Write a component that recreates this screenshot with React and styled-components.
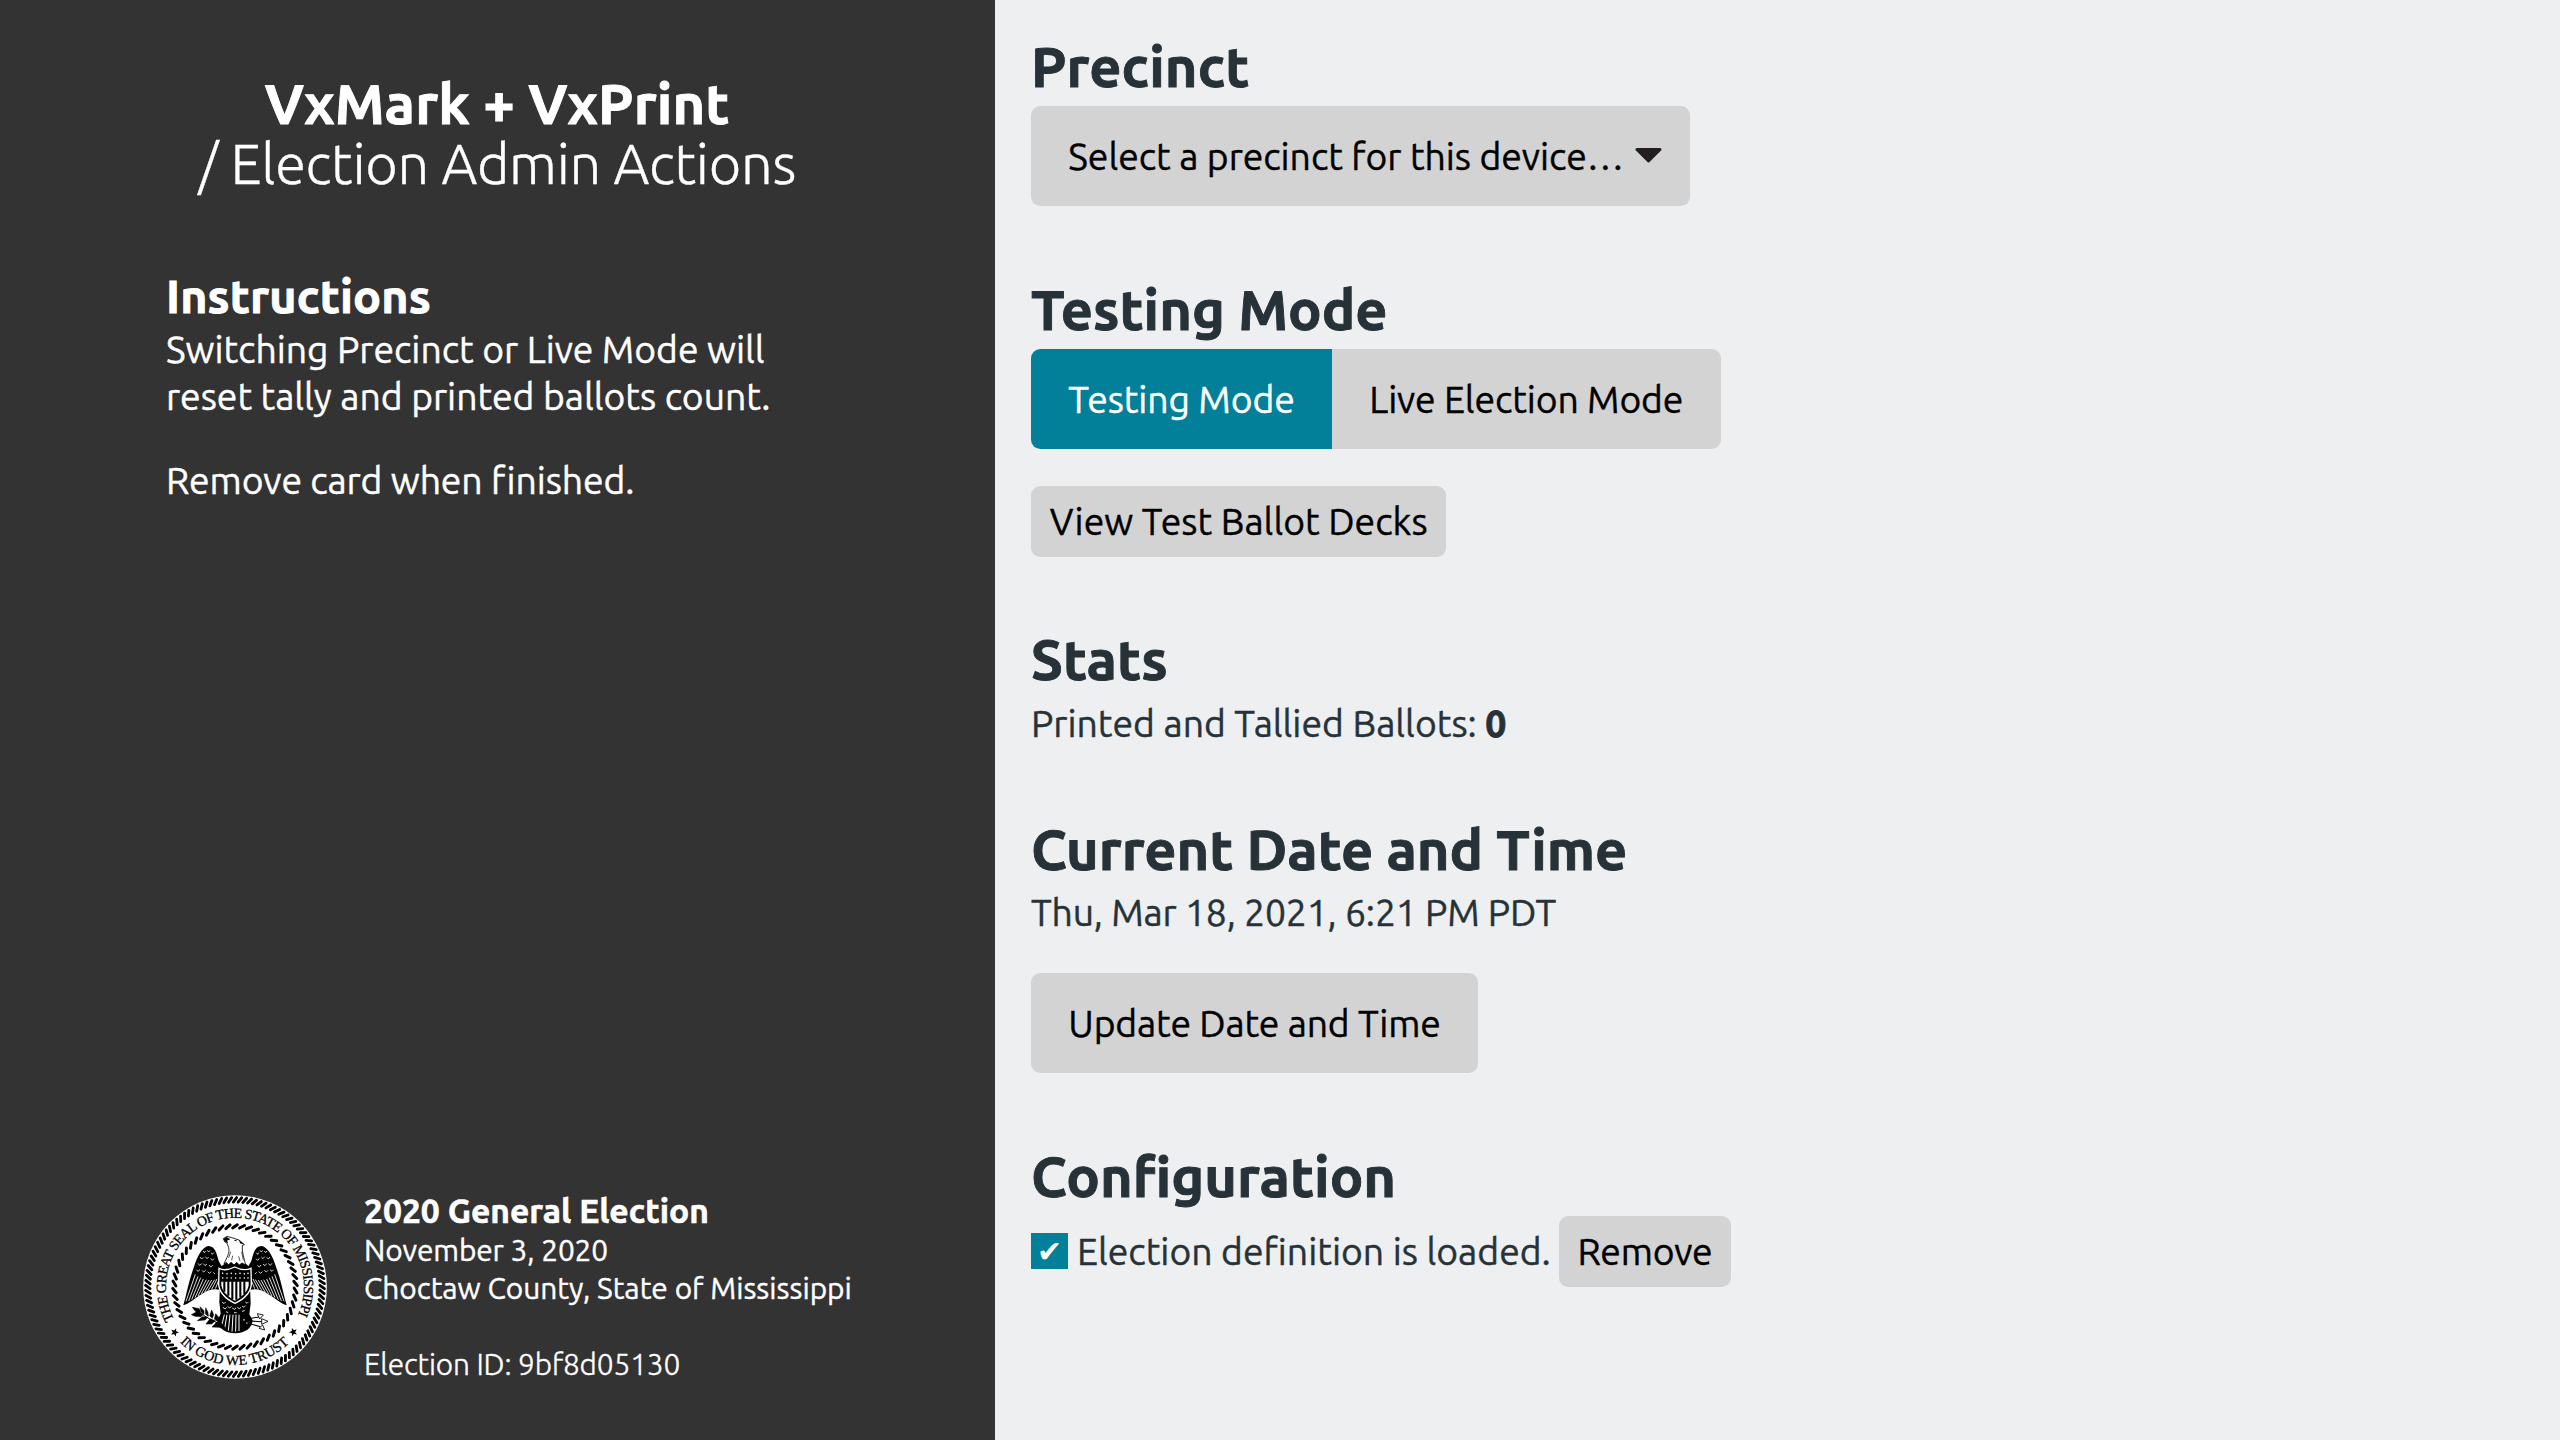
import React from 'react';
import styled, { createGlobalStyle, css } from 'styled-components';

const GlobalStyle = createGlobalStyle`
  *, *::before, *::after { box-sizing: border-box; }
  body {
    margin: 0;
    background: #edeff0;
    color: #263238;
    font-family: Ubuntu, "Noto Sans", sans-serif;
    font-size: 37.33px;
    line-height: 1.25;
    -webkit-text-stroke: 0.4px currentColor;
  }
`;

const tracked = css`
  letter-spacing: ${({ $track }) => $track || 0}px;
`;

const strong = css`
  font-weight: 700;
  -webkit-text-stroke-width: 0.9px;
`;

const Screen = styled.div`
  display: flex;
  width: 100vw;
  height: 100vh;
  overflow: hidden;
`;

const Sidebar = styled.aside`
  display: flex;
  flex-direction: column;
  flex: 0 0 994.5px;
  background: #333333;
  color: #ffffff;
`;

const SidebarTitle = styled.header`
  padding-top: 74px;
  font-size: 56px;
  line-height: 60px;
  text-align: center;
`;

const AppName = styled.div`
  ${strong}
  letter-spacing: 0.12px;
`;

const ScreenName = styled.div`
  font-weight: 300;
  letter-spacing: -0.26px;
`;

const Prose = styled.div`
  flex: 1;
  padding: 77px 166px 0;
`;

const SubHeading = styled.h2`
  margin: 0 0 4px;
  font-size: 46.67px;
  line-height: 1.1;
  ${strong}
  letter-spacing: 0.13px;
`;

const Paragraph = styled.p`
  margin: 0;
  ${tracked}
  & + & { margin-top: 37.33px; }
  b { ${strong} }
`;

const ElectionInfo = styled.footer`
  display: flex;
  align-items: center;
  gap: 37px;
  padding: 0 40px 56.5px 143px;
`;

const SealDrawing = styled.svg`
  display: block;
  flex: none;
  width: 184px;
  height: 184px;
  -webkit-text-stroke: 0;
`;

const ElectionDetails = styled.div`
  font-size: 29.87px;
`;

const ElectionTitle = styled.div`
  font-size: 33.6px;
  ${strong}
  -webkit-text-stroke-width: 0.6px;
`;

const DetailLine = styled.div`
  ${tracked}
`;

const ElectionId = styled(DetailLine)`
  margin-top: 39px;
  font-weight: 300;
`;

const Main = styled.main`
  flex: 1;
  padding: 36.67px 36.5px;
`;

const Section = styled.section`
  margin-bottom: ${({ $gap }) => $gap || 73.67}px;
`;

const Heading = styled.h1`
  margin: 0 0 9.33px;
  font-size: 56px;
  line-height: 60px;
  ${strong}
  ${tracked}
`;

const ActionRow = styled.div`
  display: flex;
  align-items: center;
  margin-top: ${({ $spaced }) => ($spaced ? 37 : 0)}px;
`;

const Button = styled.button`
  height: ${({ $small }) => ($small ? 71 : 100)}px;
  padding: 0 ${({ $small }) => ($small ? 18.67 : 37.33)}px;
  border: 0;
  border-radius: 9.33px;
  background: #d3d3d3;
  color: #000000;
  font: inherit;
  ${tracked}
  white-space: nowrap;
`;

const SelectButton = styled(Button)`
  display: flex;
  align-items: center;
  justify-content: space-between;
  width: 659px;
  padding-right: 28px;
`;

const Arrow = styled.svg`
  width: 27px;
  height: 15px;
`;

const SegmentedControl = styled.div`
  display: inline-flex;
  border-radius: 9.33px;
  overflow: hidden;
  vertical-align: top;
`;

const Segment = styled(Button)`
  border-radius: 0;
  ${({ $active }) => $active && css`
    background: #028099;
    color: #ffffff;
  `}
`;

const Checkbox = styled.span`
  display: flex;
  align-items: center;
  justify-content: center;
  width: 37px;
  height: 36px;
  margin: -2px 9px 0 0;
  background: #028099;
  color: #ffffff;
  font-size: 30px;
  line-height: 36px;
  -webkit-text-stroke: 0;
`;

const StatusText = styled.span`
  margin-right: 8px;
`;

function Rope({ count, radius, half, lean, width }) {
  return (
    <g stroke="#000" strokeWidth={width} strokeLinecap="round">
      {Array.from({ length: count }, (_, i) => (
        <line
          key={i}
          x1={345 - lean}
          y1={350 - radius + half}
          x2={345 + lean}
          y2={350 - radius - half}
          transform={`rotate(${(i * 360) / count} 345 350)`}
        />
      ))}
    </g>
  );
}

const star = 'M0 -13 L3.2 -4.3 L12.4 -4 L5.2 1.7 L7.7 10.6 L0 5.4 L-7.7 10.6 L-5.2 1.7 L-12.4 -4 L-3.2 -4.3 Z';

function Wing() {
  return (
    <g>
      <path d="M190 405 C200 370 207 330 220 295 C232 255 248 229 266 227 C284 228 290 248 296 272 L312 300 L312 364 C290 352 268 356 247 370 C226 382 207 400 190 405 Z" />
      <g stroke="#fff" strokeWidth="2.6" fill="none">
        <path d="M198 393 L226 312 M206 392 L234 318 M215 388 L242 322 M225 382 L250 326 M234 377 L259 328 M244 371 L267 329 M254 366 L275 329 M264 361 L284 328 M275 357 L291 326 M286 355 L297 328" />
      </g>
      <g stroke="#fff" strokeWidth="2.4" fill="none">
        <path d="M249 242 l4 5 l4 -5 M262 240 l4 5 l4 -5 M274 247 l3 5 l4 -5 M240 260 l5 6 l5 -5 M256 259 l5 6 l5 -5 M272 264 l5 6 l5 -5 M234 279 l5 6 l6 -5 M250 280 l5 6 l6 -5 M267 284 l5 6 l6 -5 M229 298 l5 5 l6 -5 M246 300 l5 5 l6 -5 M263 304 l5 5 l6 -5 M280 306 l5 5" />
      </g>
    </g>
  );
}

function Seal() {
  return (
    <SealDrawing viewBox="69 74 552 552">
      <defs>
        <path id="upperArc" d="M162.4 446.9 A207 207 0 1 1 527.6 446.9" />
        <path id="lowerArc" d="M179.5 515.5 A234 234 0 0 0 510.5 515.5" />
      </defs>
      <circle cx="345" cy="350" r="275.5" fill="#fff" />
      <Rope count={112} radius={261.5} half={6.8} lean={5} width={8.4} />
      <Rope count={54} radius={182} half={4.8} lean={7} width={8.8} />
      <g fontFamily='"Liberation Serif", serif' fontSize="42" fill="#000" stroke="#000" strokeWidth="0.9">
        <text textLength="838" lengthAdjust="spacing">
          <textPath href="#upperArc" textLength="838">THE GREAT SEAL OF THE STATE OF MISSISSIPPI</textPath>
        </text>
        <text textLength="364" lengthAdjust="spacing">
          <textPath href="#lowerArc" textLength="364">IN GOD WE TRUST</textPath>
        </text>
      </g>
      <path d={star} transform="translate(164 486) rotate(20)" />
      <path d={star} transform="translate(520 485) rotate(-20)" />

      <Wing />
      <g transform="translate(690 0) scale(-1 1)"><Wing /></g>

      <path d="M302 290 C315 276 330 272 345 275 C362 270 377 276 388 290 L392 400 L388 432 L398 450 C396 474 376 488 346 489 C318 488 296 476 292 452 L302 430 L298 395 Z" />
      <path d="M312 281 C320 262 330 248 326 232 L321 219 L314 214 L310 205 L321 198 L342 204 L357 209 L373 223 L367 225 C365 244 372 262 377 284 L366 278 L358 284 L350 276 L342 284 L333 276 L325 284 L319 276 Z" fill="#fff" stroke="#000" strokeWidth="2.5" />
      <path d="M310 205 L320 200 L331 207 L321 211 L325 219 L315 214 Z M341 210 L350 208 L349 213 Z M357 209 L374 223 L360 219 Z" />
      <path d="M326 262 L332 244 M365 244 L370 270 M335 270 L338 256 M356 258 L360 272" stroke="#000" strokeWidth="2" />

      <path d="M297 294 C312 302 330 297 344 290 C360 298 378 301 393 294 L394 342 C392 366 372 386 345 399 C318 386 298 366 296 342 Z" fill="#000" stroke="#fff" strokeWidth="4" />
      <path d="M304 334 H386 V345 C384 362 368 378 345 391 C322 378 306 362 304 345 Z" fill="#fff" />
      <path d="M313 333 V364 M325 333 V376 M337 333 V386 M349 333 V388 M361 333 V381 M373 333 V371" stroke="#000" strokeWidth="6.2" />
      <g fill="#fff">
        {[308, 321, 334, 347, 360, 373, 384].map((x, i) => (
          <React.Fragment key={x}>
            <circle cx={x} cy={309 + (i % 2) * 1.5} r="2.4" />
            <circle cx={x} cy={323} r="2.4" />
          </React.Fragment>
        ))}
      </g>
      <path d="M306 395 l6 5 l5 -5 M309 411 l6 5 l5 -5 M323 408 l6 5 l5 -5 M337 413 l6 4 l5 -4 M352 411 l6 4 l5 -4 M366 407 l6 4 l5 -5 M376 395 l5 4 l4 -4 M318 424 l7 3 M342 427 l8 0 M366 423 l8 -2" stroke="#fff" strokeWidth="2.6" fill="none" />
      <path d="M313 433 L305 466 M321 433 L314 474 M330 433 L325 481 M339 433 L336 484 M348 433 L347 484 M357 433 L357 482" stroke="#fff" strokeWidth="3" />
      <path d="M372 448 v1 M381 458 v1" stroke="#fff" strokeWidth="4" strokeLinecap="round" />

      <path d="M219 412 C245 433 270 448 306 464" stroke="#000" strokeWidth="3" fill="none" />
      <path d="M217 411 L238 415 L242 427 L226 423 Z M214 433 L230 424 L250 431 L243 439 L225 438 Z M240 409 L252 421 L252 432 L243 425 Z M257 412 L264 426 L265 438 L256 431 Z M232 451 L247 439 L264 440 L255 449 Z M275 419 L281 433 L277 444 L269 436 Z M258 461 L270 445 L286 451 L275 461 Z M287 430 L298 443 L295 455 L283 446 Z M276 470 L290 455 L306 460 L318 475 L295 471 Z" stroke="#000" strokeWidth="1.5" />
      <path d="M385 445 L418 440 M386 452 L425 454 M382 458 L421 469" stroke="#000" strokeWidth="3.2" />
      <path d="M412 430 L430 434 L419 446 Z M425 445 L444 453 L425 462 Z M428 464 L434 479 L417 474 Z" fill="#fff" stroke="#000" strokeWidth="2.6" />
    </SealDrawing>
  );
}

export default function App() {
  return (
    <Screen>
      <GlobalStyle />
      <Sidebar>
        <SidebarTitle>
          <AppName>VxMark + VxPrint</AppName>
          <ScreenName>/ Election Admin Actions</ScreenName>
        </SidebarTitle>
        <Prose>
          <SubHeading>Instructions</SubHeading>
          <Paragraph $track={-0.02}>Switching Precinct or Live Mode will reset tally and printed ballots count.</Paragraph>
          <Paragraph $track={-0.1}>Remove card when finished.</Paragraph>
        </Prose>
        <ElectionInfo>
          <Seal />
          <ElectionDetails>
            <ElectionTitle>2020 General Election</ElectionTitle>
            <DetailLine $track={-0.12}>November 3, 2020</DetailLine>
            <DetailLine $track={-0.02}>Choctaw County, State of Mississippi</DetailLine>
            <ElectionId $track={-0.14}>Election ID: 9bf8d05130</ElectionId>
          </ElectionDetails>
        </ElectionInfo>
      </Sidebar>
      <Main>
        <Section>
          <Heading $track={0.1}>Precinct</Heading>
          <SelectButton $track={-0.04}>
            Select a precinct for this device…
            <Arrow viewBox="0 0 27 15">
              <path d="M2 1.5 H25 L13.5 13 Z" fill="#231f20" stroke="#231f20" strokeWidth="3" strokeLinejoin="round" />
            </Arrow>
          </SelectButton>
        </Section>
        <Section $gap={73.33}>
          <Heading>Testing Mode</Heading>
          <SegmentedControl>
            <Segment $active $track={-0.1}>Testing Mode</Segment>
            <Segment $track={-0.12}>Live Election Mode</Segment>
          </SegmentedControl>
          <ActionRow $spaced>
            <Button $small>View Test Ballot Decks</Button>
          </ActionRow>
        </Section>
        <Section>
          <Heading $track={0.15}>Stats</Heading>
          <Paragraph>Printed and Tallied Ballots: <b>0</b></Paragraph>
        </Section>
        <Section $gap={74}>
          <Heading $track={-0.04}>Current Date and Time</Heading>
          <Paragraph $track={-0.17}>Thu, Mar 18, 2021, 6:21 PM PDT</Paragraph>
          <ActionRow $spaced>
            <Button $track={-0.17}>Update Date and Time</Button>
          </ActionRow>
        </Section>
        <Section>
          <Heading>Configuration</Heading>
          <ActionRow>
            <Checkbox>✔</Checkbox>
            <StatusText>Election definition is loaded.</StatusText>
            <Button $small $track={-0.25}>Remove</Button>
          </ActionRow>
        </Section>
      </Main>
    </Screen>
  );
}
